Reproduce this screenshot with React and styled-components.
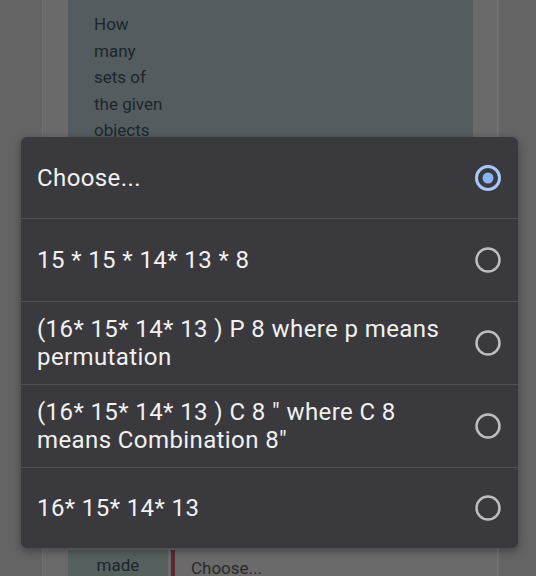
import React from "react";
import styled, { createGlobalStyle } from "styled-components";

const GlobalStyle = createGlobalStyle`
  html, body {
    margin: 0;
    padding: 0;
    background: #646464;
    font-family: Roboto, "Noto Sans", "Liberation Sans", sans-serif;
  }
`;

const Screen = styled.div`
  position: relative;
  width: 536px;
  height: 576px;
  overflow: hidden;
  background: #646464;
`;

const Page = styled.div`
  margin: 0 37px 0 42px;
  height: 100%;
  box-sizing: border-box;
  background: #6a6a6a;
  border-left: 1px solid #727272;
  border-right: 2px solid #727272;
  padding: 0 24px 0 25px;
  display: flex;
  flex-direction: column;
  justify-content: space-between;
`;

const Question = styled.div`
  background: #545c5f;
  height: 160px;
  padding: 11px 26px 0;
  color: #1c262b;
  font-size: 17px;
  line-height: 26.5px;
  flex-shrink: 0;
  & > div {
    width: 90px;
  }
`;

const AnswerRow = styled.div`
  display: flex;
  height: 26px;
  margin-right: -24px;
`;

const Label = styled.div`
  width: 100px;
  background: #56605f;
  color: #1c262b;
  font-size: 17px;
  padding-top: 5px;
  text-align: center;
  box-sizing: border-box;
`;

const Marker = styled.div`
  width: 4px;
  margin-left: 3px;
  background: #5a2a30;
`;

const Field = styled.div`
  flex: 1;
  padding: 8px 0 0 16px;
  color: #2a2a2a;
  font-size: 17px;
`;

const Dialog = styled.div`
  position: absolute;
  left: 21px;
  top: 137px;
  width: 497px;
  background: #3a393e;
  border-radius: 6px;
  box-shadow: 0 3px 10px rgba(0, 0, 0, 0.35);
  overflow: hidden;
`;

const Option = styled.div`
  display: flex;
  align-items: center;
  box-sizing: border-box;
  padding: 0 16px;
  gap: 12px;
  border-top: ${(p) => (p.$first ? "none" : "1px solid #525156")};
  height: ${(p) => p.$height}px;
`;

const OptionText = styled.div`
  flex: 1;
  color: #f1f1f1;
  font-size: 24px;
  letter-spacing: 0.4px;
  line-height: 28px;
  padding-right: 12px;
`;

const Radio = ({ checked }) => (
  <svg width="28" height="28" viewBox="0 0 28 28">
    <circle
      cx="14"
      cy="14"
      r="11.5"
      fill="none"
      stroke={checked ? "#a8c7fa" : "#bdbdbd"}
      strokeWidth={checked ? 3 : 2.5}
    />
    {checked && <circle cx="14" cy="14" r="5.5" fill="#8ab4f8" />}
  </svg>
);

const options = [
  "Choose...",
  "15 * 15 * 14* 13 * 8",
  "(16* 15* 14* 13 ) P 8 where p means permutation",
  '(16* 15* 14* 13 ) C 8 " where C 8 means Combination 8"',
  "16* 15* 14* 13",
];

const heights = [81, 83, 83, 83, 81];

export default function App() {
  return (
    <>
      <GlobalStyle />
      <Screen>
        <Page>
          <Question>
            <div>How</div>
            <div>many</div>
            <div>sets of</div>
            <div>the given</div>
            <div>objects</div>
          </Question>
          <AnswerRow>
            <Label>made</Label>
            <Marker />
            <Field>Choose...</Field>
          </AnswerRow>
        </Page>
        <Dialog>
          {options.map((o, i) => (
            <Option key={i} $first={i === 0} $height={heights[i]}>
              <OptionText>{o}</OptionText>
              <Radio checked={i === 0} />
            </Option>
          ))}
        </Dialog>
      </Screen>
    </>
  );
}
